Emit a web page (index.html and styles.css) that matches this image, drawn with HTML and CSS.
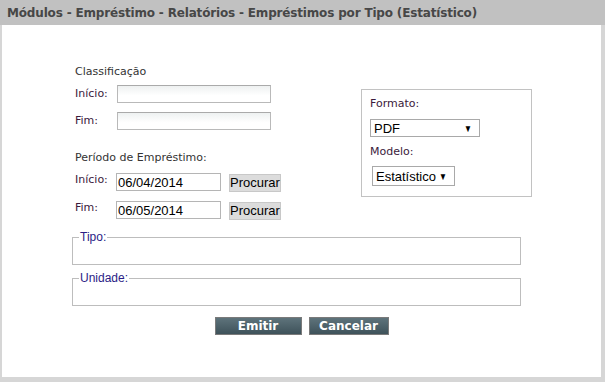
FILE: index.html
```html
<!DOCTYPE html>
<html lang="pt">
<head>
  <meta charset="UTF-8">
  <title>Empréstimos por Tipo (Estatístico)</title>
  <link rel="stylesheet" href="styles.css">
</head>
<body>
  <div class="titulo">Módulos - Empréstimo - Relatórios - Empréstimos por Tipo (Estatístico)</div>
  <div class="painel">
    <div class="form">
      <div class="coluna">
        <div class="secao">Classificação</div>
        <div class="linha">
          <span class="rotulo">Início:</span>
          <input type="text" class="campo">
        </div>
        <div class="linha">
          <span class="rotulo">Fim:</span>
          <input type="text" class="campo">
        </div>

        <div class="secao periodo">Período de Empréstimo:</div>
        <div class="linha">
          <span class="rotulo curto">Início:</span>
          <input type="text" class="data" value="06/04/2014">
          <button class="procurar">Procurar</button>
        </div>
        <div class="linha">
          <span class="rotulo curto">Fim:</span>
          <input type="text" class="data" value="06/05/2014">
          <button class="procurar">Procurar</button>
        </div>
      </div>

      <div class="caixa">
        <div class="rotulo-caixa">Formato:</div>
        <div class="select select-formato">PDF <span class="seta">▼</span></div>
        <div class="rotulo-caixa modelo">Modelo:</div>
        <div class="select select-modelo">Estatístico <span class="seta">▼</span></div>
      </div>
    </div>

    <fieldset class="grupo grupo-tipo">
      <legend>Tipo:</legend>
    </fieldset>
    <fieldset class="grupo">
      <legend>Unidade:</legend>
    </fieldset>

    <div class="acoes">
      <button class="botao emitir">Emitir</button>
      <button class="botao cancelar">Cancelar</button>
    </div>
  </div>
</body>
</html>
```

FILE: styles.css
```css
body {
  margin: 0;
  background-color: #d6d6d6;
  font-family: "DejaVu Sans", Verdana, sans-serif;
  font-size: 11px;
  color: #333;
}
.titulo {
  height: 25px;
  box-sizing: border-box;
  padding: 6px 0 0 7px;
  background-color: #c1c1c1;
  font-size: 12px;
  font-weight: bold;
  color: #474747;
  letter-spacing: -0.17px;
}
.painel {
  height: 352px;
  margin: 0 4px 0 2px;
  background-color: #fff;
}
.form {
  display: flex;
  padding: 40px 0 0 73px;
}
.coluna {
  width: 286px;
}
.secao {
  line-height: 14px;
  margin-bottom: 6px;
}
.periodo {
  margin-top: 21px;
  margin-bottom: 8px;
}
.linha {
  display: flex;
  align-items: flex-start;
  margin-bottom: 9px;
  line-height: 14px;
}
.rotulo {
  width: 42px;
  color: #3b1a3b;
  padding-top: 2px;
}
.rotulo.curto {
  width: 41px;
  padding-top: 0;
}
.campo {
  width: 154px;
  height: 18px;
  box-sizing: border-box;
  margin: 0;
  border: 1px solid #b9b9b9;
  border-top-color: #aaa;
  background: linear-gradient(#eef1f1, #fff 60%);
}
.data {
  width: 105px;
  height: 18px;
  box-sizing: border-box;
  margin: 0;
  padding: 0 1px;
  border: 1px solid #b5b5b5;
  font-family: "Liberation Sans", Arial, sans-serif;
  font-size: 13px;
  color: #000;
}
.procurar {
  width: 52px;
  height: 18px;
  margin: 1px 0 0 8px;
  padding: 0;
  border: 1px solid #c8c8c8;
  background-color: #dcdcdc;
  font-family: "Liberation Sans", Arial, sans-serif;
  font-size: 13px;
  line-height: 16px;
  color: #000;
}
.caixa {
  width: 171px;
  height: 108px;
  box-sizing: border-box;
  margin-top: 24px;
  padding: 7px 0 0 8px;
  border: 1px solid #c2c2c2;
}
.rotulo-caixa {
  line-height: 14px;
  color: #3b1a3b;
}
.modelo {
  margin-top: 8px;
}
.select {
  box-sizing: border-box;
  display: flex;
  justify-content: space-between;
  align-items: center;
  border: 1px solid #a9a9a9;
  font-family: "Liberation Sans", Arial, sans-serif;
  font-size: 13px;
  color: #000;
  padding: 0 6px 0 3px;
}
.select-formato {
  width: 110px;
  height: 18px;
  margin-top: 8px;
}
.select-modelo {
  width: 83px;
  height: 20px;
  margin: 7px 0 0 2px;
}
.seta {
  font-size: 10px;
  transform: scaleX(0.8);
}
.grupo {
  width: 449px;
  height: 34px;
  box-sizing: border-box;
  margin: 7px 0 0 70px;
  padding: 0;
  border: 1px solid #bdbdbd;
}
.grupo-tipo {
  margin-top: 2px;
}
.grupo legend {
  margin-left: 6px;
  padding: 0 1px;
  font-family: "Liberation Sans", Arial, sans-serif;
  font-size: 12px;
  line-height: 12px;
  color: #2b1d86;
}
.acoes {
  display: flex;
  justify-content: center;
  gap: 7px;
  margin-top: 11px;
}
.botao {
  height: 18px;
  padding: 0;
  border: 1px solid #7a7a7a;
  background: linear-gradient(#5e737b, #3e525a);
  font-family: "DejaVu Sans", Verdana, sans-serif;
  font-size: 12px;
  font-weight: bold;
  color: #fff;
}
.emitir {
  width: 87px;
}
.cancelar {
  width: 80px;
}
```
